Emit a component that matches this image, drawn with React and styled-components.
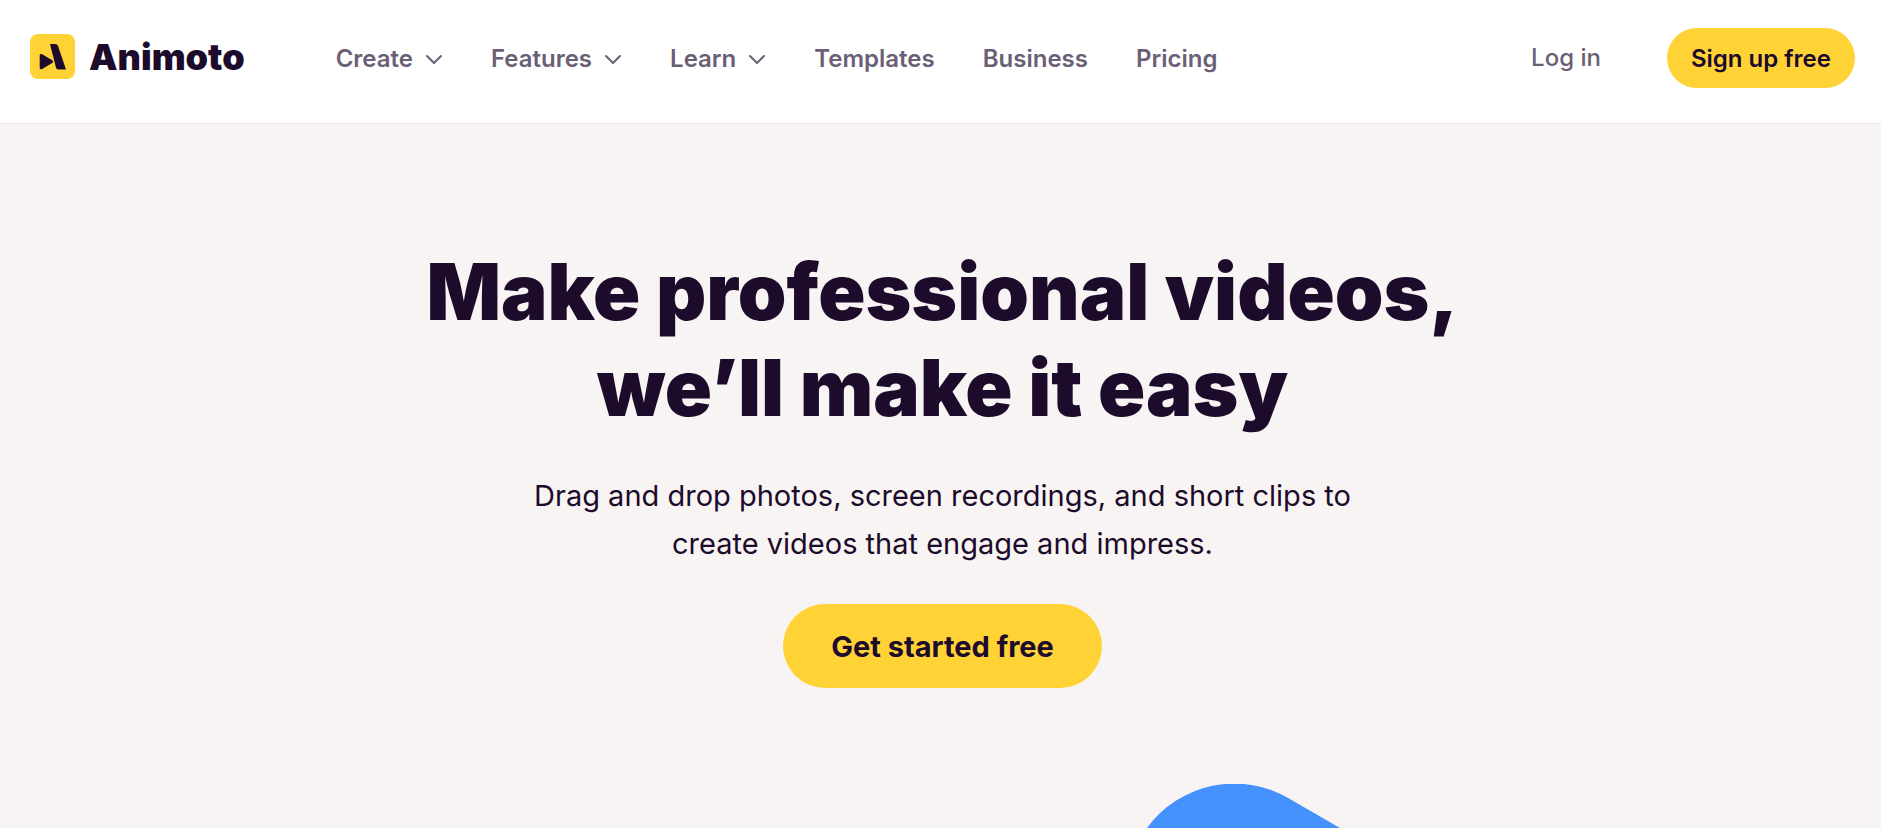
import React from 'react';
import styled, { createGlobalStyle } from 'styled-components';

const GlobalStyles = createGlobalStyle`
  :root {
    --ink: #1d0b2b;
    --gray-1: #6b5f76;
    --yellow: #ffd236;
    --blue: #4592ff;
    --sand: #f8f4f3;
    --line: #efebea;
  }
  * {
    box-sizing: border-box;
    margin: 0;
    padding: 0;
  }
  body {
    font-family: 'Inter', 'Liberation Sans', sans-serif;
    color: var(--ink);
    background: var(--sand);
  }
  a {
    color: inherit;
    text-decoration: none;
  }
`;

const HeaderStyles = styled.header`
  display: flex;
  align-items: flex-start;
  padding: 28px 26px 33px 30px;
  background: #fff;
  border-bottom: 1px solid var(--line);
`;

const Logo = styled.a`
  display: flex;
  align-items: center;
  gap: 14px;
  height: 57px;
  font-size: 36px;
  font-weight: 900;
  svg {
    width: 45px;
    height: 45px;
  }
`;

const Nav = styled.nav`
  flex: 1;
  margin-left: 91px;
  ul {
    display: flex;
    align-items: center;
    gap: 48px;
    height: 62px;
    list-style: none;
  }
`;

const NavButton = styled.button`
  display: flex;
  align-items: center;
  gap: 12px;
  border: none;
  background: none;
  font: inherit;
  font-size: 24px;
  font-weight: 600;
  line-height: 32px;
  color: var(--gray-1);
  cursor: pointer;
  svg {
    width: 18px;
    height: 12px;
  }
`;

const NavLink = styled.a`
  font-size: 24px;
  font-weight: ${(props) => (props.$light ? 500 : 600)};
  line-height: 32px;
  color: var(--gray-1);
`;

const Account = styled.div`
  display: flex;
  align-items: center;
  gap: 66px;
`;

const Button = styled.button`
  height: ${(props) => (props.$large ? '84px' : '60px')};
  padding: 0 ${(props) => (props.$large ? '48px' : '24px')};
  border: none;
  border-radius: 42px;
  background: var(--yellow);
  color: var(--ink);
  font: inherit;
  font-size: ${(props) => (props.$large ? '29px' : '24px')};
  font-weight: ${(props) => (props.$large ? 700 : 600)};
  white-space: nowrap;
  cursor: pointer;
`;

const HeroStyles = styled.main`
  display: flex;
  flex-direction: column;
  align-items: center;
  padding: 120px 28px 0 32px;
  text-align: center;
  h1 {
    font-size: 78px;
    font-weight: 900;
    line-height: 96px;
  }
  p {
    max-width: 860px;
    margin: 36px 0;
    font-size: 29px;
    line-height: 48px;
  }
`;

const HeroArt = styled.svg`
  display: block;
  width: 1200px;
  max-width: 100%;
  margin-top: 96px;
`;

const menus = ['Create', 'Features', 'Learn'];
const links = ['Templates', 'Business', 'Pricing'];

function LogoMark() {
  return (
    <svg viewBox="0 0 45 45" aria-hidden="true">
      <rect width="45" height="45" rx="8" fill="#ffd236" />
      <path
        d="M9.7 21.6C9.7 20.300 11 19.600 12.200 20.200L22.200 26.300C23.400 27 23.400 28.400 22.200 29.100L12.200 35.100C11 35.700 9.700 35 9.700 33.700Z"
        fill="#1d0b2b"
      />
      <path
        d="M20 10H25C26.600 10 27.600 10.800 28.100 12.200L36 35.500H28.500C27.200 35.500 26.400 35 26 33.800Z"
        fill="#1d0b2b"
      />
    </svg>
  );
}

function Chevron() {
  return (
    <svg viewBox="0 0 18 12" fill="none" aria-hidden="true">
      <path
        d="M2 3l7 7 7-7"
        stroke="currentColor"
        strokeWidth="2"
        strokeLinecap="round"
        strokeLinejoin="round"
      />
    </svg>
  );
}

function Header() {
  return (
    <HeaderStyles>
      <Logo href="/">
        <LogoMark />
        <span>Animoto</span>
      </Logo>
      <Nav aria-label="Main">
        <ul>
          {menus.map((item) => (
            <li key={item}>
              <NavButton type="button" aria-haspopup="true">
                {item}
                <Chevron />
              </NavButton>
            </li>
          ))}
          {links.map((item) => (
            <li key={item}>
              <NavLink href={`/${item.toLowerCase()}`}>{item}</NavLink>
            </li>
          ))}
        </ul>
      </Nav>
      <Account>
        <NavLink href="/login" $light>
          Log in
        </NavLink>
        <Button type="button">Sign up free</Button>
      </Account>
    </HeaderStyles>
  );
}

function Hero() {
  return (
    <HeroStyles>
      <h1>
        Make professional videos,
        <br />
        we’ll make it easy
      </h1>
      <p>
        Drag and drop photos, screen recordings, and short clips to
        <br />
        create videos that engage and impress.
      </p>
      <Button type="button" $large>
        Get started free
      </Button>
      <HeroArt viewBox="0 0 1200 44" aria-hidden="true">
        <path
          d="M804 44A108 108 0 0 1 946 14.500L997 44z"
          fill="var(--blue)"
        />
      </HeroArt>
    </HeroStyles>
  );
}

export default function App() {
  return (
    <>
      <GlobalStyles />
      <Header />
      <Hero />
    </>
  );
}
